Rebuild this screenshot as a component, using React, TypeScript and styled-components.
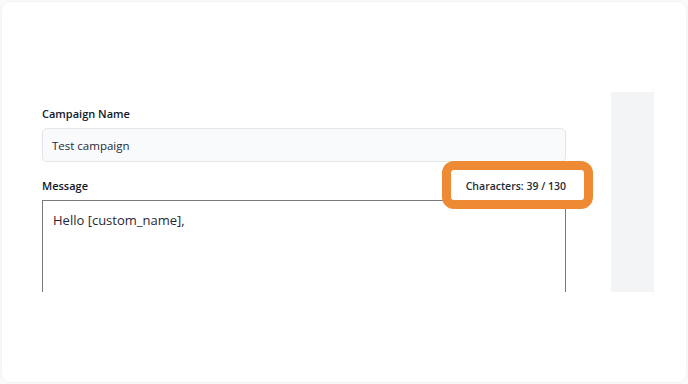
import * as React from "react";
import styled, { createGlobalStyle } from "styled-components";

const Global = createGlobalStyle`
  html, body {
    margin: 0;
    padding: 0;
    background: #fafafa;
  }
  body {
    font-family: "Open Sans", "Noto Sans", sans-serif;
  }
`;

const Card = styled.div`
  box-sizing: border-box;
  margin: 2px;
  height: 380px;
  background: #ffffff;
  border-radius: 8px;
  box-shadow: 0 0 3px rgba(0, 0, 0, 0.08);
  padding-top: 90px;
`;

const Viewport = styled.div`
  height: 200px;
  overflow: hidden;
  display: flex;
  padding-left: 40px;
`;

const Form = styled.div`
  width: 524px;
  padding-top: 14px;
  display: flex;
  flex-direction: column;
  & > * {
    flex-shrink: 0;
  }
`;

const Side = styled.div`
  margin-left: 45px;
  width: 43px;
  background: #f3f4f6;
`;

const LabelRow = styled.div<{ $top?: number }>`
  display: flex;
  justify-content: space-between;
  align-items: center;
  margin-top: ${(p) => p.$top ?? 0}px;
`;

const Label = styled.label`
  font-size: 11px;
  line-height: 16px;
  font-weight: 600;
  color: #111827;
`;

const Input = styled.div`
  box-sizing: border-box;
  margin-top: 6px;
  height: 34px;
  padding: 0 9px;
  display: flex;
  align-items: center;
  background: #f9fafb;
  border: 1px solid #e2e5ea;
  border-radius: 5px;
  font-size: 11.5px;
  color: #1f2937;
`;

const Counter = styled.span`
  position: relative;
  z-index: 1;
  font-size: 10.5px;
  line-height: 16px;
  font-weight: 600;
  color: #262b33;

  &::before {
    content: "";
    position: absolute;
    left: -24px;
    right: -27px;
    top: -17px;
    bottom: -15px;
    z-index: -1;
    background: #ffffff;
    border: 9px solid #ee8a34;
    border-radius: 12px;
  }
`;

const TextArea = styled.div`
  box-sizing: border-box;
  margin-top: 6px;
  height: 160px;
  padding: 10px 10px;
  border: 1px solid #7a7a7a;
  font-size: 13px;
  line-height: 18px;
  color: #1f2937;
`;

export default function App() {
  const message = "Hello [custom_name],";
  return (
    <>
      <Global />
      <Card>
        <Viewport>
          <Form>
            <LabelRow>
              <Label>Campaign Name</Label>
            </LabelRow>
            <Input>Test campaign</Input>
            <LabelRow $top={16}>
              <Label>Message</Label>
              <Counter>Characters: 39 / 130</Counter>
            </LabelRow>
            <TextArea>{message}</TextArea>
          </Form>
          <Side />
        </Viewport>
      </Card>
    </>
  );
}
